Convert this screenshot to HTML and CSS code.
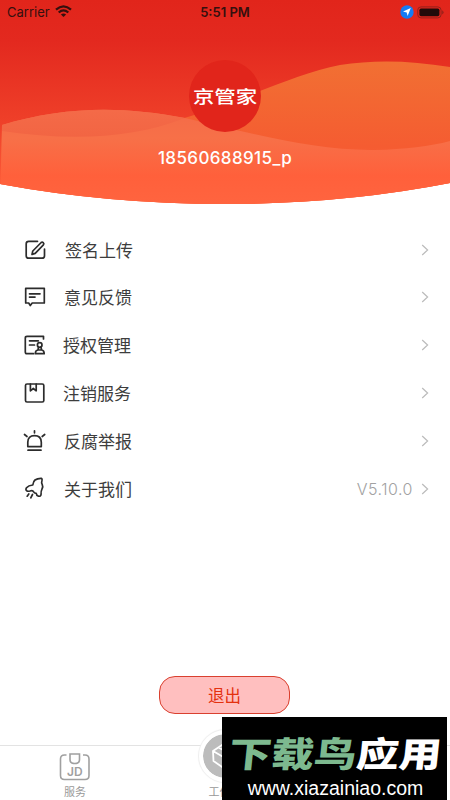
FILE: index.html
```html
<!DOCTYPE html>
<html lang="zh-CN">
<head>
<meta charset="utf-8">
<title>京管家</title>
<link rel="stylesheet" href="styles.css">
</head>
<body>
<div class="app">
  <header class="hero">
    <svg class="waves" viewBox="0 0 450 205" aria-hidden="true">
      <defs>
        <linearGradient id="base" x2="0" y2="1"><stop offset="0" stop-color="#e1251b"/><stop offset=".2" stop-color="#e3291f"/><stop offset=".6" stop-color="#ef4029"/><stop offset="1" stop-color="#ff633d"/></linearGradient>
        <linearGradient id="right" gradientUnits="userSpaceOnUse" x1="0" y1="60" x2="0" y2="204"><stop offset="0" stop-color="#f17033"/><stop offset=".6" stop-color="#f55c31"/><stop offset="1" stop-color="#ff603b"/></linearGradient>
        <linearGradient id="left" gradientUnits="userSpaceOnUse" x1="0" y1="110" x2="0" y2="204"><stop offset="0" stop-color="#f46b48"/><stop offset=".3" stop-color="#f77048"/><stop offset=".7" stop-color="#ff603b"/><stop offset="1" stop-color="#ff643f"/></linearGradient>
        <linearGradient id="lens" gradientUnits="userSpaceOnUse" x1="0" y1="110" x2="0" y2="137"><stop offset="0" stop-color="#f46a48"/><stop offset="1" stop-color="#f26543"/></linearGradient>
        <clipPath id="dome"><path d="M0 0H450V183Q342 204 225 204Q108 204 0 184Z"/></clipPath>
      </defs>
      <g clip-path="url(#dome)">
        <path fill="url(#base)" d="M0 0H450V205H0Z"/>
        <path fill="url(#right)" d="M2 131C70 141 132 139 177 120C233 105 290 75 340 65Q390 57 450 67V205H0Z"/>
        <path fill="url(#left)" d="M2 125C65 106 122 106 185 118C250 133 315 151 375 150Q420 149 450 141V205H0Z"/>
        <path fill="url(#lens)" d="M2 125C65 106 122 106 185 118C132 139 70 141 2 131Z"/>
      </g>
    </svg>
    <div class="status">
      <div class="carrier"><span>Carrier</span>
        <svg width="17" height="13" viewBox="0 0 17 13" fill="none" stroke="#35100e" stroke-width="2.3"><path d="M1 4.6Q8.5-1.8 16 4.6M3.7 7.5Q8.5 3.3 13.3 7.5"/><path d="M8.5 12L5.9 9.4Q8.5 7.4 11.1 9.4Z" fill="#35100e" stroke="none"/></svg>
      </div>
      <span class="clock">5:51 PM</span>
      <div class="power">
        <svg width="14" height="14" viewBox="0 0 14 14"><circle cx="7" cy="7" r="6.7" fill="#147bf5"/><path d="M10.8 3.1L7.6 11L6.7 7.4L3 6.6Z" fill="#fff"/></svg>
        <svg width="27" height="13" viewBox="0 0 27 13"><rect x=".7" y=".9" width="23.4" height="11" rx="3.3" fill="none" stroke="#95201a"/><rect x="2.4" y="2.6" width="20" height="7.6" rx="1.6" fill="#210b0a"/><path d="M25.2 4.2Q28 6.4 25.2 8.6Z" fill="#95201a"/></svg>
      </div>
    </div>
    <div class="avatar"><span>京管家</span></div>
    <div class="account">18560688915_p</div>
  </header>

  <main class="menu">
    <div class="row">
      <svg class="icon" viewBox="0 0 24 24"><path d="M14.5 3.3H5.7Q3.2 3.3 3.2 5.8V17.7Q3.2 20.2 5.7 20.2H19Q21.5 20.2 21.5 17.7V11"/><path d="M9.8 13L18.2 4.5Q19.2 3.6 20.2 4.6Q21.4 5.8 20.4 6.8L12.2 15.4L9 16.4Z"/></svg>
      <span class="label upload">签名上传</span><svg class="arrow" viewBox="0 0 8 12"><path d="M1.2 1L6.6 6L1.2 11"/></svg>
    </div>
    <div class="row lift">
      <svg class="icon" viewBox="0 0 24 24"><path d="M2.7 3.3H21.3V18H9.2L7.3 20.5L5.7 18H2.7Z"/><path d="M6.5 8.8H17M6.5 12.1H12"/></svg>
      <span class="label">意见反馈</span><svg class="arrow" viewBox="0 0 8 12"><path d="M1.2 1L6.6 6L1.2 11"/></svg>
    </div>
    <div class="row">
      <svg class="icon" viewBox="0 0 24 24"><path d="M20.5 6V3.3H4Q2.3 3.3 2.3 5V19Q2.3 20.7 4 20.7H10.5M6.5 7.8H15.3M6.5 12H11.5"/><circle cx="16.7" cy="12" r="2.3"/><path d="M15.5 14.2L15 17H18.6L18 14.2M12.3 20.7Q12.3 17.3 15 17H18.6Q21.2 17.3 21.2 20.7Z"/></svg>
      <span class="label stamp">授权管理</span><svg class="arrow" viewBox="0 0 8 12"><path d="M1.2 1L6.6 6L1.2 11"/></svg>
    </div>
    <div class="row">
      <svg class="icon" viewBox="0 0 24 24"><rect x="2.5" y="3" width="18.3" height="18" rx="1.5"/><path d="M7.4 3V9.8L10.3 7.5L13.2 9.8V3"/></svg>
      <span class="label stamp">注销服务</span><svg class="arrow" viewBox="0 0 8 12"><path d="M1.2 1L6.6 6L1.2 11"/></svg>
    </div>
    <div class="row">
      <svg class="icon" viewBox="0 0 24 24"><path d="M4.8 17.6V13.3Q4.8 6.7 11.5 6.7T18.3 13.3V17.6ZM5 21.2H18M11.5 1.8V3.8M1.5 5.5L4 7.5M21.7 5.5L19.2 7.5"/></svg>
      <span class="label">反腐举报</span><svg class="arrow" viewBox="0 0 8 12"><path d="M1.2 1L6.6 6L1.2 11"/></svg>
    </div>
    <div class="row">
      <svg class="icon" viewBox="0 0 24 24"><path d="M18.3 1.3Q14.5 1.2 12 3Q10.2 4.5 9.8 8Q5.5 8.3 3.5 10.8Q2 13.2 4.3 14.1Q5.5 14.4 7 14Q9.8 13 10.6 14.8Q11 16.3 13.2 16.3Q13.3 18.6 15.5 19.2Q18 19.5 18.1 17Q17.8 14.5 19 12Q20.3 9.6 19.2 7.5Q18.2 6 18.9 3.8Q19.4 1.6 18.3 1.3Z"/><path d="M5.8 17L4.2 19.2M9.5 17.5L7.8 20.8"/></svg>
      <span class="label">关于我们</span><span class="version">V5.10.0</span><svg class="arrow" viewBox="0 0 8 12"><path d="M1.2 1L6.6 6L1.2 11"/></svg>
    </div>
  </main>

  <button class="logout">退出</button>

  <nav class="tabs">
    <div class="tab">
      <svg width="32" height="28" viewBox="0 0 32 28" fill="none" stroke="#a0a0a0" stroke-width="1.6"><path d="M7.5 2H5.5Q1.5 2 1.5 6V22.5Q1.5 26.5 5.5 26.5H26Q30 26.5 30 22.5V6Q30 2 26 2H24M11 1H20.5V6.5Q20.5 10.5 15.8 10.5Q11 10.5 11 6.5Z"/><text x="15.8" y="22.5" text-anchor="middle" class="jd">JD</text></svg>
      <span>服务</span>
    </div>
    <div class="tab work">
      <div class="disc"><svg width="30" height="30" viewBox="0 0 30 30" fill="none" stroke="#fff" stroke-width="1.8" stroke-linejoin="round"><path d="M3 10L15 2L27 9V21L15 28L3.5 20ZM3 10L15 17L27 9M15 17V28M8.5 6.5L20.5 13"/></svg></div>
      <span>工作台</span>
    </div>
    <div class="tab"></div>
  </nav>

  <aside class="watermark">
    <div class="brand"><span>下载鸟</span>应用</div>
    <div class="site">www.xiazainiao.com</div>
  </aside>
</div>
</body>
</html>
```
FILE: styles.css
```css
* { box-sizing: border-box; }
body { margin: 0; background: #fff; font-family: Inter, "Noto Sans CJK SC", sans-serif; }
.app { position: relative; width: 450px; height: 800px; overflow: hidden; display: flex; flex-direction: column; }
.hero { position: relative; height: 205px; flex: none; display: flex; flex-direction: column; align-items: center; }
.waves { position: absolute; inset: 0; width: 450px; height: 205px; }
.status { position: relative; width: 100%; height: 24px; padding: 0 6px 0 8px; display: grid; grid-template-columns: 1fr auto 1fr; align-items: center; color: #35100e; font-size: 13px; line-height: 24px; }
.carrier { display: flex; align-items: center; gap: 5px; margin-left: -1px; }
.carrier svg { margin-top: -2px; }
.clock { font-weight: 600; margin-left: -2px; }
.power { display: flex; justify-content: flex-end; align-items: center; gap: 3px; }
.avatar { position: relative; width: 72px; height: 72px; margin-top: 36px; border-radius: 50%; background: #e1251b; color: #fff; display: flex; align-items: center; justify-content: center; white-space: nowrap; font-size: 20px; font-weight: 500; line-height: 72px; }
.avatar span { transform: translateY(1px) scale(1.07, .88); }
.account { position: relative; margin-top: 14px; color: #fff; font-size: 17px; line-height: 24px; font-weight: 500; letter-spacing: .38px; white-space: nowrap; }
.menu { margin-top: 21px; padding: 0 21px 0 23px; }
.row { height: 47.8px; display: flex; align-items: center; }
.lift { padding-bottom: 1px; }
.icon { width: 24px; height: 24px; flex: none; fill: none; stroke: #2c2c2c; stroke-width: 1.7; stroke-linejoin: round; stroke-linecap: round; }
.label { margin-left: 17px; flex: 1; color: #3d3d3d; font-family: "Noto Sans CJK SC", sans-serif; font-size: 17px; line-height: 24px; }
.upload { margin-left: 18px; }
.stamp { margin-left: 16px; }
.arrow { width: 8px; height: 12px; fill: none; stroke: #bbb; stroke-width: 1.2; }
.version { margin-right: 8px; color: #a2a2a2; font-size: 16px; font-weight: 300; line-height: 24px; letter-spacing: .5px; }
.logout { align-self: center; flex: none; width: 131px; height: 38px; margin: 163px 1px 0 0; padding: 0; border: 1.5px solid #d9402f; border-radius: 16px; background: #ffbfbf; color: #e4310f; font-family: "Noto Sans CJK SC", sans-serif; font-size: 16.5px; line-height: 24px; }
.tabs { margin-top: auto; flex: none; height: 55px; border-top: 1px solid #e3e3e3; display: grid; grid-template-columns: repeat(3, 1fr); font-size: 11px; line-height: 14px; color: #999; }
.tab { display: flex; flex-direction: column; align-items: center; padding-top: 7px; gap: 4px; }
.jd { fill: #a0a0a0; stroke: none; font: 600 12px Inter, sans-serif; }
.work { padding: 0; gap: 0; margin-top: -16px; }
.disc { width: 52px; height: 52px; flex: none; border: 4px solid #fff; border-radius: 50%; background: #bcbcbc; background-clip: padding-box; box-shadow: 0 0 1px 1px #ededed; display: flex; align-items: center; justify-content: center; margin-bottom: 3px; }
.watermark { position: absolute; left: 222px; top: 717px; width: 225px; height: 83px; background: #000; color: #fff; text-align: center; white-space: nowrap; }
.brand { margin-top: 13px; font-family: "Noto Sans CJK SC", sans-serif; font-size: 42.5px; line-height: 44px; font-weight: 900; transform: translateX(1px) skewX(-6deg) scaleY(.82); }
.brand span { color: #7db98f; }
.site { margin: 3px 0 0 2px; font-family: "Liberation Sans", sans-serif; font-size: 19.5px; line-height: 23px; }
```
